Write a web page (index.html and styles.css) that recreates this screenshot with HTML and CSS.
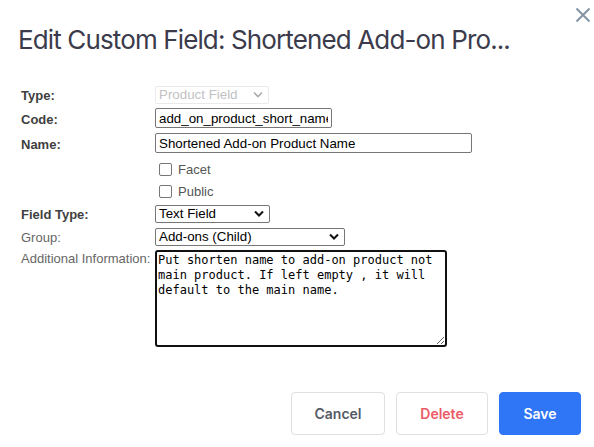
FILE: index.html
```html
<!DOCTYPE html>
<html>
<head>
<meta charset="utf-8">
<link rel="stylesheet" href="styles.css">
</head>
<body>
<div class="modal">
  <div class="header">
    <h1 class="title">Edit Custom Field: Shortened Add-on Pro...</h1>
    <button class="close" aria-label="Close">
      <svg width="16" height="16" viewBox="0 0 16 16"><path d="M1.5 1.5 L14.5 14.5 M14.5 1.5 L1.5 14.5" stroke="#8494a3" stroke-width="2" fill="none"/></svg>
    </button>
  </div>
  <form class="form">
    <div class="row r-type">
      <label class="lbl bold">Type:</label>
      <div class="sel-wrap w-type disabled">
        <select class="sel" disabled><option>Product Field</option></select>
        <svg class="chev" width="10" height="7" viewBox="0 0 10 7"><path d="M1 1.5 L5 5.5 L9 1.5" stroke="#aaa" stroke-width="1.6" fill="none"/></svg>
      </div>
    </div>
    <div class="row r-input">
      <label class="lbl bold">Code:</label>
      <input class="inp w-code" type="text" value="add_on_product_short_name">
    </div>
    <div class="row r-input">
      <label class="lbl bold">Name:</label>
      <input class="inp w-name" type="text" value="Shortened Add-on Product Name">
    </div>
    <div class="row r-check first">
      <span class="lbl"></span>
      <label class="chk"><span class="box"></span>Facet</label>
    </div>
    <div class="row r-check">
      <span class="lbl"></span>
      <label class="chk"><span class="box"></span>Public</label>
    </div>
    <div class="row r-sel after-check">
      <label class="lbl bold">Field Type:</label>
      <div class="sel-wrap w-ftype">
        <select class="sel"><option>Text Field</option></select>
        <svg class="chev" width="10" height="7" viewBox="0 0 10 7"><path d="M1 1.5 L5 5.5 L9 1.5" stroke="#111" stroke-width="2" fill="none"/></svg>
      </div>
    </div>
    <div class="row r-sel">
      <label class="lbl">Group:</label>
      <div class="sel-wrap w-group">
        <select class="sel"><option>Add-ons (Child)</option></select>
        <svg class="chev" width="10" height="7" viewBox="0 0 10 7"><path d="M1 1.5 L5 5.5 L9 1.5" stroke="#111" stroke-width="2" fill="none"/></svg>
      </div>
    </div>
    <div class="row r-area">
      <label class="lbl top">Additional Information:</label>
      <textarea class="area">Put shorten name to add-on product not main product. If left empty , it will default to the main name.</textarea>
    </div>
  </form>
  <div class="footer">
    <button class="btn btn-cancel" type="button">Cancel</button>
    <button class="btn btn-delete" type="button">Delete</button>
    <button class="btn btn-save" type="button">Save</button>
  </div>
</div>
</body>
</html>
```

FILE: styles.css
```css
* { box-sizing: border-box; }
html, body { margin: 0; padding: 0; background: #fff; }
body { width: 594px; height: 447px; overflow: hidden; font-family: "Liberation Sans", Arial, sans-serif; }

.modal { display: flex; flex-direction: column; }

.header { display: flex; justify-content: space-between; align-items: flex-start; padding: 0 0 0 18px; height: 85px; }
.title {
  margin: 24px 0 0 0;
  font-family: Inter, "Noto Sans", sans-serif;
  font-weight: 400;
  font-size: 26px;
  line-height: 32px;
  letter-spacing: -0.87px;
  color: #3b3b4c;
  white-space: nowrap;
}
.close { border: 0; background: none; padding: 0; margin: 7px 3px 0 0; width: 16px; height: 16px; display: flex; }

.form { display: flex; flex-direction: column; padding-left: 21px; }
.row { display: flex; align-items: center; }
.lbl { width: 134px; flex: none; font-size: 13px; color: #666; padding-top: 2px; }
.lbl.bold { font-weight: bold; color: #3f3f3f; }
.lbl.top { align-self: flex-start; padding-top: 1px; white-space: nowrap; }

.r-type { height: 18px; }
.r-input { height: 20px; margin-top: 5px; }
.r-check { height: 22px; }
.r-check.first { margin-top: 5px; }
.r-sel { height: 18px; margin-top: 5px; }
.r-sel.after-check { margin-top: 2px; }
.r-area { margin-top: 5px; align-items: flex-start; }

.inp {
  height: 20px;
  border: 1px solid #767676;
  border-radius: 2px;
  padding: 0 3px;
  font-family: "Liberation Sans", Arial, sans-serif;
  font-size: 13.33px;
  color: #000;
  outline: none;
}
.w-code { width: 177px; }
.w-name { width: 317px; }

.chk { display: flex; align-items: center; font-size: 13px; color: #555; padding-left: 4px; }
.box { width: 13px; height: 13px; border: 1px solid #767676; border-radius: 2px; margin-right: 6px; background: #fff; }

.sel-wrap { position: relative; height: 18px; }
.sel {
  appearance: none;
  -webkit-appearance: none;
  height: 18px;
  width: 100%;
  border: 1px solid #767676;
  border-radius: 2px;
  background: #fff;
  padding: 0 0 0 3px;
  font-family: "Liberation Sans", Arial, sans-serif;
  font-size: 13.33px;
  color: #000;
  outline: none;
}
.chev { position: absolute; right: 6px; top: 6px; pointer-events: none; }
.disabled .sel { border-color: #e2e2e2; color: #a8a8a8; background: #fff; }
.w-type { width: 114px; }
.w-ftype { width: 115px; }
.w-group { width: 190px; }

.area {
  width: 292px;
  height: 97px;
  border: 2px solid #111;
  border-radius: 3px;
  padding: 1px 1px;
  font-family: "DejaVu Sans Mono", "Liberation Mono", monospace;
  font-size: 12px;
  line-height: 15px;
  color: #000;
  resize: both;
  outline: none;
}

.footer { display: flex; justify-content: flex-end; gap: 11px; padding-right: 13px; margin-top: 45px; }
.btn {
  height: 43px;
  border-radius: 4px;
  font-family: Inter, "Noto Sans", sans-serif;
  font-weight: 600;
  font-size: 14px;
  cursor: pointer;
}
.btn-cancel { width: 94px; background: #fff; border: 1px solid #e0e0e0; color: #555b66; }
.btn-delete { width: 92px; background: #fff; border: 1px solid #e0e0e0; color: #ec5a66; }
.btn-save { width: 82px; background: #2f76f6; border: 1px solid #2f76f6; color: #fff; }
```
